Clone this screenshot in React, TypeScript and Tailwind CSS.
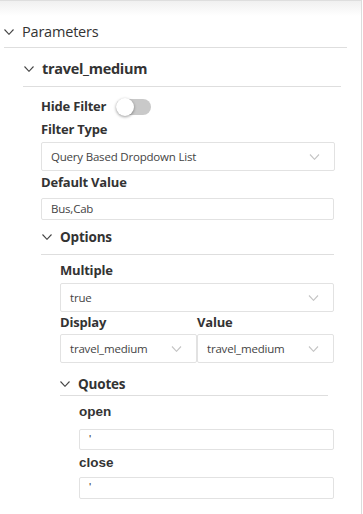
const Chevron = ({ className }: { className?: string }) => (
  <svg viewBox="0 0 10 6" className={className} fill="none" stroke="currentColor" strokeWidth="1.1">
    <path d="M0.5 0.5 L5 5.3 L9.5 0.5" />
  </svg>
);

const SelectBox = ({ value, className }: { value: string; className?: string }) => (
  <div
    className={`flex h-[29px] items-center justify-between rounded-[2px] border border-[#e2e2e2] pl-[9px] pr-[14px] text-[11.5px] tracking-[-0.2px] text-[#444] ${className ?? ""}`}
  >
    <span>{value}</span>
    <Chevron className="h-[6px] w-[11px] text-[#c4c4c4]" />
  </div>
);

const TextBox = ({ value, className }: { value: string; className?: string }) => (
  <div
    className={`flex items-center rounded-[2px] border border-[#e2e2e2] pl-[9px] text-[11.5px] tracking-[-0.2px] text-[#444] ${className ?? ""}`}
  >
    {value}
  </div>
);

const App = () => {
  return (
    <div className="h-[514px] w-[363px] bg-white font-['Open_Sans',sans-serif] text-[#333]">
      <div className="h-full w-[362px] border-r border-[#dcdcdc]">
        <div className="h-[16px] border-t border-[#dedede] bg-linear-to-b from-[#f0f0f0] to-white" />

        {/* Parameters */}
        <div className="flex h-[31px] items-center gap-[8px] pl-[4px] text-[14.5px] tracking-[-0.2px]">
          <Chevron className="h-[6px] w-[10px] text-[#444]" />
          <span>Parameters</span>
        </div>
        <div className="ml-[4px] h-px w-[343px] bg-[#dedede]" />

        {/* travel_medium */}
        <div className="pl-[23px]">
          <div className="flex h-[38px] items-center gap-[8px] pl-px pt-[4px] text-[14.5px] font-bold tracking-[-0.3px]">
            <Chevron className="h-[6px] w-[10px] text-[#444]" />
            <span>travel_medium</span>
          </div>
          <div className="h-px w-[318px] bg-[#dedede]" />

          <div className="pl-[18px]">
            <div className="mt-[9px] flex h-[22px] items-center gap-[10px] text-[13px] font-bold tracking-[-0.2px]">
              <span>Hide Filter</span>
              <div className="relative h-[16px] w-[35px] rounded-full bg-[#c9c9c9]">
                <div className="absolute left-0 top-[-1px] h-[18px] w-[18px] rounded-full bg-white shadow-[0_1px_3px_rgba(0,0,0,0.4)]" />
              </div>
            </div>
            <div className="flex h-[24px] items-center text-[13px] font-bold tracking-[-0.2px]">Filter Type</div>
            <SelectBox value="Query Based Dropdown List" className="w-[294px]" />
            <div className="mb-[4px] mt-px flex h-[22px] items-center text-[13px] font-bold tracking-[-0.2px]">Default Value</div>
            <TextBox value="Bus,Cab" className="h-[22px] w-[293px]" />

            {/* Options */}
            <div className="flex h-[34px] items-center gap-[8px] pl-px text-[13.5px] font-bold tracking-[-0.2px]">
              <Chevron className="h-[6px] w-[10px] text-[#444]" />
              <span>Options</span>
            </div>
            <div className="h-px w-[293px] bg-[#dedede]" />

            <div className="pl-[19px]">
              <div className="flex h-[28px] items-center pt-[4px] text-[13px] font-bold tracking-[-0.2px]">Multiple</div>
              <SelectBox value="true" className="w-[274px]" />
              <div className="grid h-[22px] w-[274px] grid-cols-2 items-center text-[13px] font-bold tracking-[-0.2px]">
                <span>Display</span>
                <span>Value</span>
              </div>
              <div className="grid w-[274px] grid-cols-2">
                <SelectBox value="travel_medium" />
                <SelectBox value="travel_medium" />
              </div>

              {/* Quotes */}
              <div className="flex h-[32px] items-center gap-[8px] pt-[10px] text-[13.5px] font-bold tracking-[-0.2px]">
                <Chevron className="h-[6px] w-[10px] text-[#444]" />
                <span>Quotes</span>
              </div>
              <div className="h-px w-[268px] bg-[#dedede]" />

              <div className="pl-[19px] font-['Liberation_Sans',sans-serif]">
                <div className="flex h-[33px] items-center text-[13.5px] font-bold">open</div>
                <TextBox value="'" className="h-[21px] w-[255px]" />
                <div className="flex h-[27px] items-center text-[13.5px] font-bold">close</div>
                <TextBox value="'" className="h-[22px] w-[255px]" />
              </div>
            </div>
          </div>
        </div>
      </div>
    </div>
  );
};

export default App;
